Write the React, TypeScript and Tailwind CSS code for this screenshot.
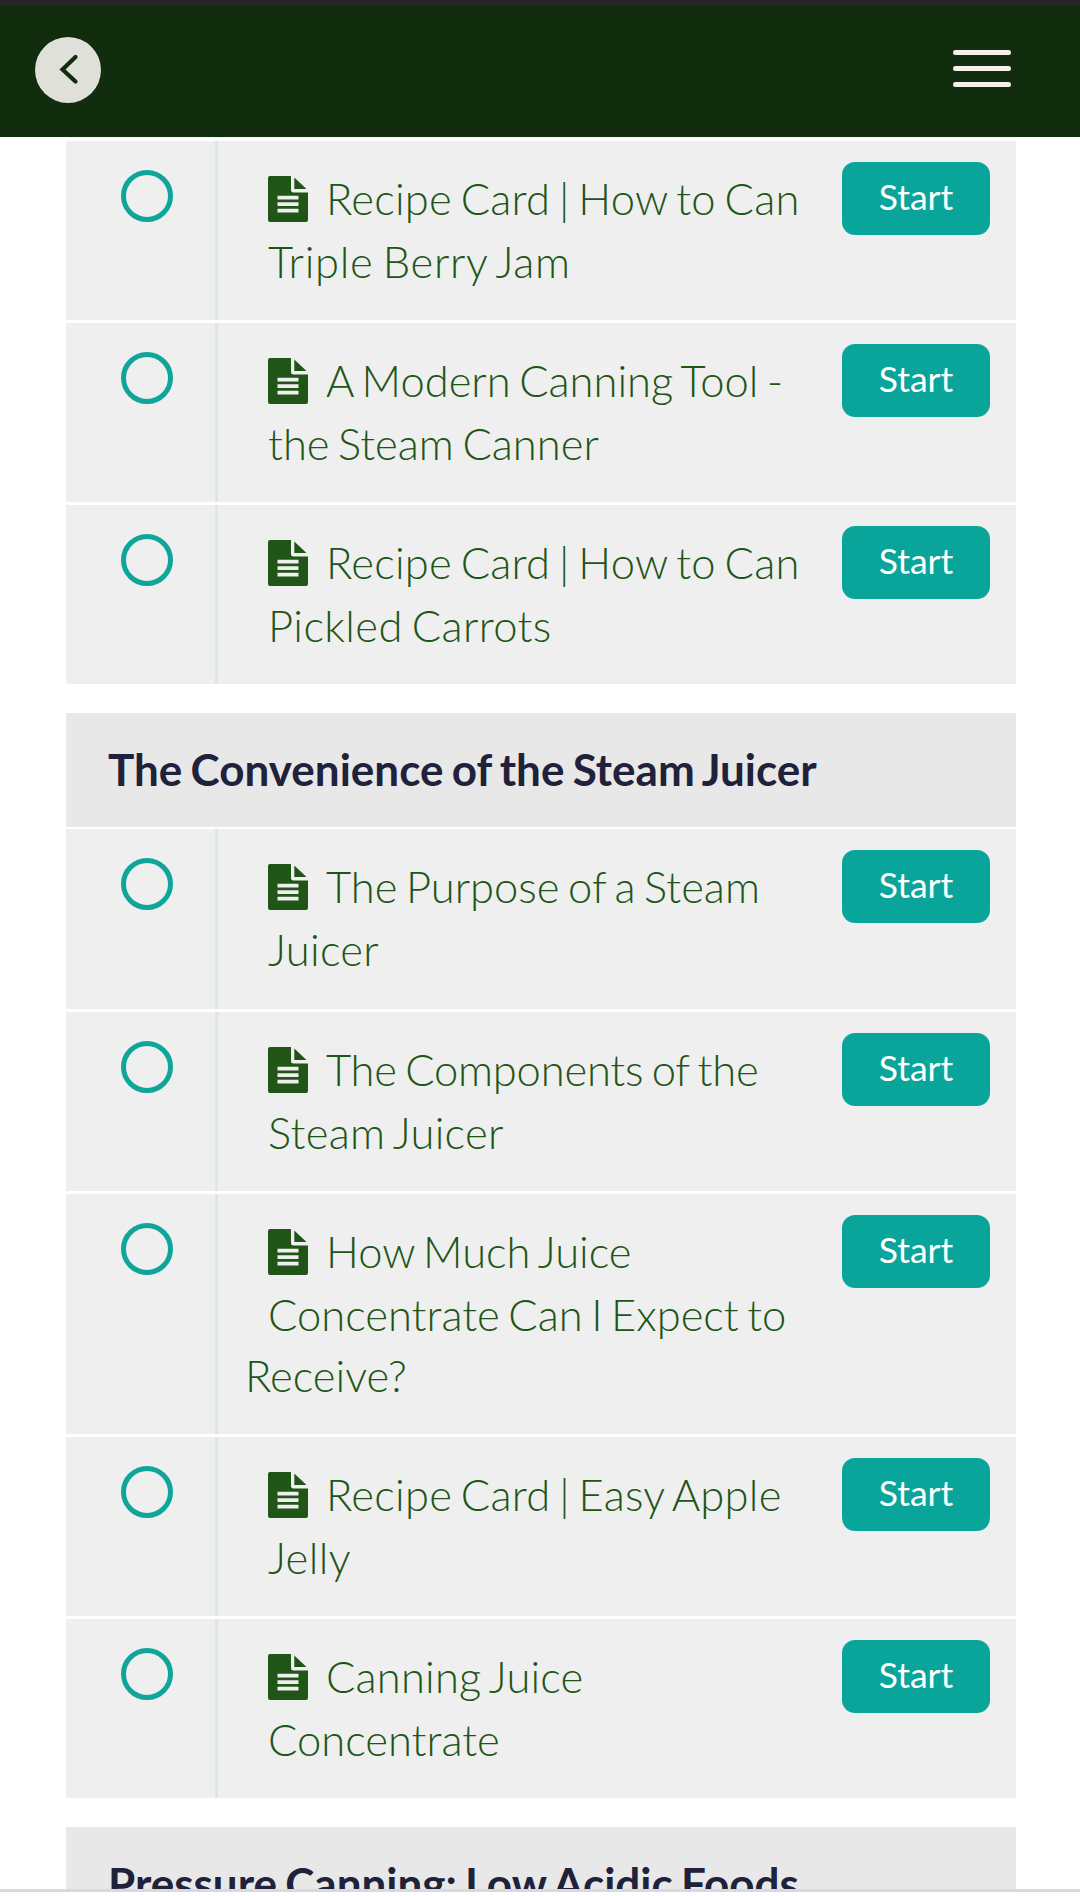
import React from 'react';

interface Line {
  text: string;
  tracking?: string;
}

interface Lesson {
  lines: Line[];
  height: string;
}

const SHORT = 'h-[179px]';

const CANNING: Lesson[] = [
  {
    lines: [
      { text: 'Recipe Card | How to Can', tracking: 'tracking-[0.23px]' },
      { text: 'Triple Berry Jam', tracking: 'tracking-[0.7px]' },
    ],
    height: SHORT,
  },
  { lines: [{ text: 'A Modern Canning Tool -' }, { text: 'the Steam Canner' }], height: SHORT },
  {
    lines: [
      { text: 'Recipe Card | How to Can', tracking: 'tracking-[0.23px]' },
      { text: 'Pickled Carrots', tracking: 'tracking-[0.38px]' },
    ],
    height: SHORT,
  },
];

const STEAM_JUICER: Lesson[] = [
  {
    lines: [{ text: 'The Purpose of a Steam' }, { text: 'Juicer', tracking: 'tracking-[0.3px]' }],
    height: 'h-[180px]',
  },
  {
    lines: [
      { text: 'The Components of the', tracking: 'tracking-[-0.2px]' },
      { text: 'Steam Juicer', tracking: 'tracking-[0.28px]' },
    ],
    height: SHORT,
  },
  {
    lines: [{ text: 'How Much Juice' }, { text: 'Concentrate Can I Expect to' }, { text: 'Receive?' }],
    height: 'h-[240px]',
  },
  {
    lines: [
      { text: 'Recipe Card | Easy Apple', tracking: 'tracking-[0.25px]' },
      { text: 'Jelly', tracking: 'tracking-[0.4px]' },
    ],
    height: SHORT,
  },
  {
    lines: [{ text: 'Canning Juice', tracking: 'tracking-[0.18px]' }, { text: 'Concentrate' }],
    height: SHORT,
  },
];

function DocumentIcon() {
  return (
    <svg viewBox="0 0 40 46" className="w-10 h-[46px] flex-shrink-0 mt-[9.5px]" aria-hidden="true">
      <path
        fill="#215517"
        fillRule="evenodd"
        d="M2 0H23V14Q23 16.5 25.5 16.5H40V44Q40 46 38 46H2Q0 46 0 44V2Q0 0 2 0ZM9.5 19.7V23.5H30.5V19.7ZM9.5 26.3V30H30.5V26.3ZM9.5 32.8V36.6H30.5V32.8Z"
      />
      <path fill="#215517" d="M26.3 1.5V13H38.5Z" />
    </svg>
  );
}

function LessonRow({ lines, height }: Lesson) {
  const [first, second, third] = lines;
  return (
    <li className={`flex bg-[#efefef] ${height}`}>
      <div className="w-[149px] pl-[55px] pt-[29px] flex-shrink-0">
        <div className="w-[52px] h-[52px] rounded-full border-[5px] border-[#10a59a]" />
      </div>
      <div className="w-[3px] bg-[#d9e9e5] flex-shrink-0" />
      <a className="flex-1 min-w-0 pl-[27px] pt-[25px] text-[43.5px] leading-[61px] [word-spacing:-3.3px] font-light whitespace-nowrap text-[#215517]">
        <span className="flex h-[63px] pl-[22.5px]">
          <DocumentIcon />
          <span className={`ml-[18.5px] mt-[2px] ${first.tracking ?? ''}`}>{first.text}</span>
        </span>
        <span className={`block pl-[23px] mt-[2px] ${second.tracking ?? ''}`}>{second.text}</span>
        {third && <span className={`block ${third.tracking ?? ''}`}>{third.text}</span>}
      </a>
      <button className="w-[148px] h-[73px] mt-[21px] mr-[26px] pb-[3px] flex-shrink-0 rounded-[13px] bg-[#0aa59a] text-white text-[35.5px] leading-none">
        Start
      </button>
    </li>
  );
}

function LessonList({ lessons }: { lessons: Lesson[] }) {
  return (
    <ul className="flex flex-col gap-[3px]">
      {lessons.map((lesson, i) => (
        <LessonRow key={i} {...lesson} />
      ))}
    </ul>
  );
}

function SectionTitle({ children }: { children: React.ReactNode }) {
  return (
    <h2 className="h-[114px] pl-[42px] pb-[2px] flex items-center bg-[#e8e8e8] text-[44px] [word-spacing:-2.4px] font-bold whitespace-nowrap text-[#20213a]">
      {children}
    </h2>
  );
}

export default function App() {
  return (
    <div className="w-[1080px] h-[1896px] flex flex-col overflow-hidden bg-white font-['Lato',sans-serif]">
      <header className="h-[137px] flex-shrink-0 border-t-[6px] border-[#262626] bg-[#122d0d] pl-[35px] pr-[69px] flex items-start justify-between">
        <button aria-label="Back" className="mt-[31px] w-[66px] h-[66px] rounded-full bg-[#dfe0da]">
          <svg viewBox="0 0 66 66" className="w-full h-full" fill="none" stroke="#122d0d" strokeWidth="4.2" strokeLinecap="round">
            <path d="M40.5 20L27.5 32.5L40.5 44.5" />
          </svg>
        </button>
        <button aria-label="Menu" className="mt-[44px] w-[58px] flex flex-col gap-[11px]">
          <span className="h-[5px] rounded-sm bg-[#f2f2eb]" />
          <span className="h-[5px] rounded-sm bg-[#f2f2eb]" />
          <span className="h-[5px] rounded-sm bg-[#f2f2eb]" />
        </button>
      </header>

      <main className="h-[1752px] flex-shrink-0 overflow-hidden pl-[66px] pr-[64px]">
        {/* last pixel of the row scrolled under the header */}
        <div className="h-px mb-[3px] bg-[#f0f4f2]" />
        <LessonList lessons={CANNING} />
        <section className="mt-[29px]">
          <SectionTitle>The Convenience of the Steam Juicer</SectionTitle>
          <div className="mt-[2px]">
            <LessonList lessons={STEAM_JUICER} />
          </div>
        </section>
        <section className="mt-[29px]">
          <SectionTitle>Pressure Canning: Low Acidic Foods</SectionTitle>
        </section>
      </main>

      <footer className="flex-1 border-t-[3px] border-[#d8d9dc] bg-white" />
    </div>
  );
}
